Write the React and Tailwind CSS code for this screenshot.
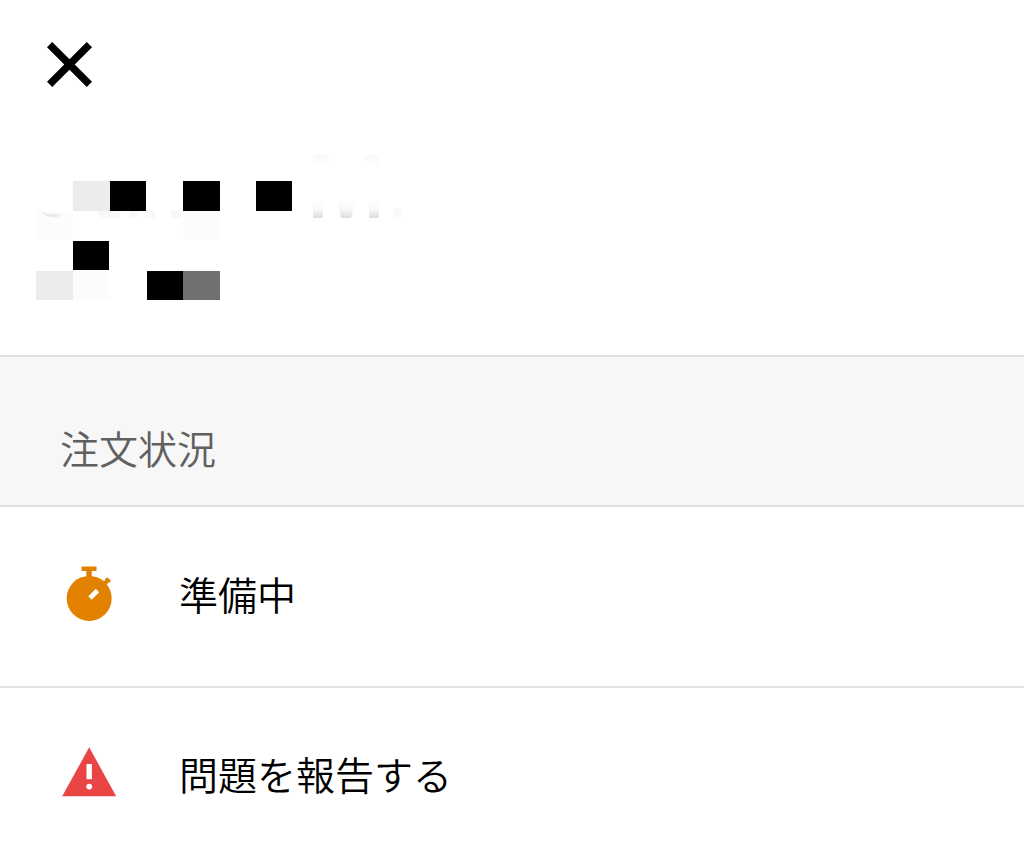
function CloseIcon() {
  return (
    <svg viewBox="0 0 46 46" className="size-[46px]" aria-hidden="true">
      <path d="M2.6 2.6 L42.4 42.4 M42.4 2.6 L2.6 42.4" stroke="#000" strokeWidth="7.4" fill="none" />
    </svg>
  );
}

function Mosaic() {
  return (
    <svg viewBox="36 150 374 156" className="h-[156px] w-[374px]" role="img" aria-label="Hidden name">
      <defs>
        <linearGradient id="fade" x1="0" y1="0" x2="0" y2="1">
          <stop offset="0" stopColor="#fff" />
          <stop offset="0.5" stopColor="#f8f8f8" />
          <stop offset="1" stopColor="#dedede" />
        </linearGradient>
        <linearGradient id="faint" x1="0" y1="0" x2="0" y2="1">
          <stop offset="0" stopColor="#f9f9f9" />
          <stop offset="1" stopColor="#fff" />
        </linearGradient>
      </defs>
      <path d="M36 211h37v28h-37z M183 211h37v28h-37z M73 271h36v29h-36z" fill="#fcfcfc" />
      <path d="M41 211 Q47 215 61 214 L58 217 Q47 219 41 211Z" fill="#eaeaea" />
      <path d="M98 211h22v7h-17q-5-2-5-7z M129 210h8v8h-8z M146 210h9v8h-9z M171 210h10v8h-10z" fill="#f8f8f8" />
      <path d="M313 155h15l4 12h-17z M364 155h15v12h-17z" fill="url(#faint)" />
      <path d="M313 200h10v18h-10z M337 200h19l-5 18h-10z M369 200h10v18h-10z" fill="url(#fade)" />
      <circle cx="398" cy="213" r="5" fill="#f9f9f9" />
      <path d="M73 181h37v30h-37z M36 271h37v29h-37z" fill="#ececec" />
      <path d="M110 181h36v30h-36z M183 181h37v30h-37z M256 181h36v30h-36z M73 241h36v29h-36z M147 271h36v29h-36z" fill="#000" />
      <path d="M183 271h37v29h-37z" fill="#707070" />
    </svg>
  );
}

function StopwatchIcon() {
  return (
    <svg viewBox="0 0 60 60" className="size-[60px] shrink-0" aria-hidden="true">
      <g fill="#e28100">
        <circle cx="30.2" cy="32.4" r="22.5" />
        <path d="M22.5 .5h15v4.6h-4.8v7h-5.4v-7h-4.8z" />
        <path d="M43 16.5 L46.4 14 L46 13 L48.4 11.3 L52 14.9 L50 17 L49.2 16.6 L47 20 Z" />
      </g>
      <path d="M31 32 L38.5 24.5" stroke="#fff" strokeWidth="4.8" />
    </svg>
  );
}

function WarningIcon() {
  return (
    <svg viewBox="0 0 60 60" className="size-[60px] shrink-0" aria-hidden="true">
      <path d="M30.2 1.3 L57.2 50.3 H3.2 Z" fill="#e94545" />
      <path d="M27.5 18h5.4v15.2h-5.4z" fill="#fff" />
      <circle cx="30.2" cy="40.6" r="2.9" fill="#fff" />
    </svg>
  );
}

export default function App() {
  return (
    <main className="bg-white font-['Noto_Sans_CJK_JP',sans-serif] text-[39px] leading-[54px] font-[350] text-black">
      <header className="flex flex-col items-start gap-[62px] border-b-2 border-[#e2e2e2] px-9 pt-[42px] pb-[49px]">
        <button type="button" aria-label="閉じる" className="ml-[11px]">
          <CloseIcon />
        </button>
        <Mosaic />
      </header>
      <section>
        <h2 className="border-b-2 border-[#e2e2e2] bg-[#f7f7f7] px-15 pt-[63px] pb-[31px] font-[350] text-[#606060]">
          注文状況
        </h2>
        <div className="flex gap-[60px] border-b-2 border-[#e2e2e2] px-[59px] pt-[59px] pb-15">
          <StopwatchIcon />
          <p>準備中</p>
        </div>
        <button type="button" className="flex w-full gap-[60px] px-[59px] pt-[58px] pb-9 text-left">
          <WarningIcon />
          <span>問題を報告する</span>
        </button>
      </section>
    </main>
  );
}
